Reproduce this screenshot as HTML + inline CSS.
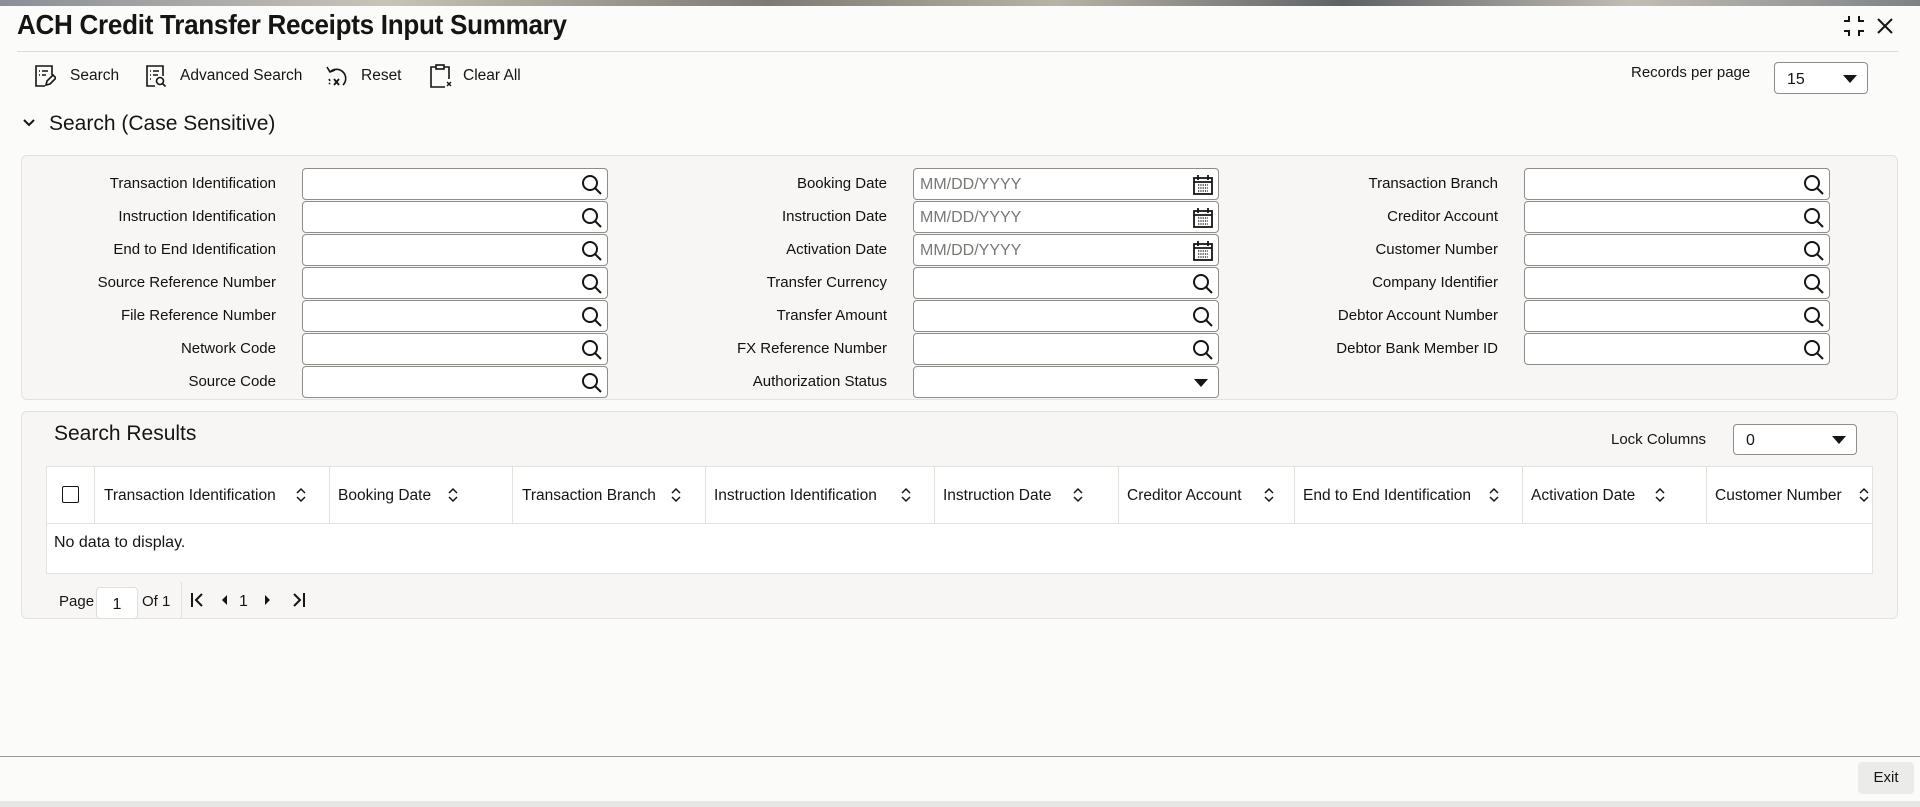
<!DOCTYPE html>
<html><head><meta charset="utf-8"><style>
*{box-sizing:border-box;margin:0;padding:0}
body{width:1920px;height:807px;position:relative;background:#fbfbfa;font-family:"Liberation Sans",sans-serif;color:#161513;overflow:hidden}
.a{position:absolute}
.strip{left:0;top:0;width:1920px;height:6px;background:linear-gradient(90deg,#8a8f96,#c9c3b8 20%,#7d7a72 40%,#b9b3a6 55%,#5e6266 70%,#c2bdb3 85%,#7d8287)}
.title{left:17px;top:9px;font-size:28px;font-weight:bold;transform:scaleX(.93);transform-origin:left;white-space:nowrap;letter-spacing:-.3px}
.hr{height:1px;background:#dcdbd8}
.tb{top:67px;font-size:15.5px;white-space:nowrap}
.panel{background:#f7f6f4;border:1px solid #e4e2de;border-radius:6px}
.lbl{font-size:15px;text-align:right;width:260px;white-space:nowrap;color:#111}
.inp{width:306px;height:32px;background:#fff;border:1px solid #8f8d89;border-radius:4px}
.inp svg{position:absolute;right:4px;top:5px}
.ph{position:absolute;left:6px;top:7px;font-size:16px;color:#7a7874}
.th{font-size:15.5px;top:487px;white-space:nowrap}
.vl{width:1px;background:#e4e2de}
</style></head><body>
<div class="a strip"></div>
<div class="a title">ACH Credit Transfer Receipts Input Summary</div>
<svg class="a" style="left:1843px;top:15px" width="22" height="22" viewBox="0 0 22 22" fill="none" stroke="#161513" stroke-width="2"><path d="M6 1v5H1M16 1v5h5M6 21v-5H1M16 21v-5h5"/></svg>
<svg class="a" style="left:1875px;top:16px" width="20" height="20" viewBox="0 0 20 20" stroke="#161513" stroke-width="2"><path d="M3 3l14 14M17 3L3 17"/></svg>
<div class="a hr" style="left:17px;top:51px;width:1881px"></div>

<svg class="a" style="left:34px;top:64px" width="22" height="24" viewBox="0 0 22 24" fill="none" stroke="#161513" stroke-width="1.6"><path d="M11 22H2V2h16v9"/><path d="M5 7h1M8 7h6M5 11h1M8 11h4"/><path d="M12 21l1-4 6-6 3 3-6 6z"/></svg>
<div class="a tb" style="left:70px">Search</div>
<svg class="a" style="left:145px;top:64px" width="22" height="24" viewBox="0 0 22 24" fill="none" stroke="#161513" stroke-width="1.6"><path d="M10 22H2V2h16v10"/><path d="M5 7h1M8 7h6M5 11h1M8 11h5M5 15h1"/><circle cx="15" cy="17" r="3.5"/><path d="M17.5 19.5l3 3"/></svg>
<div class="a tb" style="left:180px">Advanced Search</div>
<svg class="a" style="left:325px;top:64px" width="26" height="24" viewBox="0 0 26 24" fill="none" stroke="#161513" stroke-width="1.6"><path d="M5 8A9 9 0 1 1 18 21"/><path d="M2 3l3 5 5-2"/><path d="M9 15l5 6M14 15l-5 6" stroke-width="1.8"/><path d="M4 15l1 2M4 20l1-1" /></svg>
<div class="a tb" style="left:361px">Reset</div>
<svg class="a" style="left:429px;top:63px" width="24" height="26" viewBox="0 0 24 26" fill="none" stroke="#161513" stroke-width="1.6"><path d="M7 4H2v20h14"/><path d="M15 4h5v12"/><rect x="7" y="2" width="8" height="4"/><path d="M18 19l4 4M22 19l-4 4" stroke-width="1.4"/></svg>
<div class="a tb" style="left:463px">Clear All</div>

<div class="a" style="left:1631px;top:64px;font-size:15px">Records per page</div>
<div class="a inp" style="left:1774px;top:62px;width:94px;height:32px;border-color:#8f8d89"><span class="ph" style="color:#161513;left:12px;top:8px">15</span><svg class="a" style="right:10px;top:12px" width="14" height="8"><path d="M0 0h14L7 8z" fill="#161513"/></svg></div>

<svg class="a" style="left:22px;top:118px" width="14" height="10" viewBox="0 0 14 10" fill="none" stroke="#161513" stroke-width="2"><path d="M2 2l5 5 5-5"/></svg>
<div class="a" style="left:49px;top:112px;font-size:21px;white-space:nowrap">Search (Case Sensitive)</div>

<div class="a panel" style="left:21px;top:155px;width:1877px;height:245px"></div>
<div id="form"></div>

<div class="a panel" style="left:21px;top:411px;width:1877px;height:208px"></div>
<div class="a" style="left:54px;top:422px;font-size:21px;white-space:nowrap">Search Results</div>
<div class="a" style="left:1611px;top:431px;font-size:15px">Lock Columns</div>
<div class="a inp" style="left:1733px;top:424px;width:124px;height:31px"><span class="ph" style="color:#161513;left:12px;top:7px">0</span><svg class="a" style="right:10px;top:11px" width="14" height="8"><path d="M0 0h14L7 8z" fill="#161513"/></svg></div>

<div class="a" style="left:46px;top:466px;width:1827px;height:108px;background:#fff;border:1px solid #e4e2de"></div>
<div class="a hr" style="left:46px;top:523px;width:1827px;background:#e4e2de"></div>
<div class="a" style="left:62px;top:486px;width:17px;height:17px;border:1.6px solid #161513;border-radius:2px"></div>
<div id="th"></div>
<div class="a" style="left:54px;top:534px;font-size:16px">No data to display.</div>

<div class="a" style="left:59px;top:593px;font-size:15px">Page</div>
<div class="a" style="left:96px;top:587px;width:42px;height:32px;background:#fff;border:1px solid #e0deda;border-radius:4px;font-size:16px;text-align:center;padding-top:8px">1</div>
<div class="a" style="left:142px;top:593px;font-size:15px">Of 1</div>
<div class="a vl" style="left:181px;top:582px;height:37px"></div>
<svg class="a" style="left:190px;top:592px" width="120" height="16" viewBox="0 0 120 16" fill="#161513" stroke="#161513"><path d="M2 1v14" stroke-width="2"/><path d="M12 2L6 8l6 6" fill="none" stroke-width="2"/><path d="M37 3v10l-5-5z" stroke="none"/><text x="49" y="14" font-size="16" stroke="none" font-family="Liberation Sans">1</text><path d="M75 3v10l5-5z" stroke="none"/><path d="M104 2l6 6-6 6" fill="none" stroke-width="2"/><path d="M114 1v14" stroke-width="2"/></svg>

<div class="a hr" style="left:0;top:756px;width:1920px;background:#9a9894"></div>
<div class="a" style="left:1858px;top:762px;width:56px;height:32px;background:#ebebea;border-radius:4px;font-size:15px;text-align:center;padding-top:7px">Exit</div>
<div class="a" style="left:0;top:801px;width:1920px;height:6px;background:#e6e6e5"></div>

<script>
const S='<svg width="22" height="22" viewBox="0 0 22 22" fill="none" stroke="#161513" stroke-width="2"><circle cx="9" cy="9" r="7"/><path d="M14 14l6 6"/></svg>';
const C='<svg width="22" height="22" viewBox="0 0 22 22" fill="none" stroke="#161513" stroke-width="1.8"><rect x="2" y="4" width="18" height="16"/><path d="M6 1v5M16 1v5M2 8h18"/><path d="M6 11h10M6 14h10M6 17h10" stroke-width="1.2" stroke-dasharray="1.3 1"/></svg>';
const D='<svg width="14" height="8" style="top:12px;right:10px"><path d="M0 0h14L7 8z" fill="#161513"/></svg>';
const cols=[
 [16,302,[["Transaction Identification",S],["Instruction Identification",S],["End to End Identification",S],["Source Reference Number",S],["File Reference Number",S],["Network Code",S],["Source Code",S]]],
 [627,913,[["Booking Date",C,1],["Instruction Date",C,1],["Activation Date",C,1],["Transfer Currency",S],["Transfer Amount",S],["FX Reference Number",S],["Authorization Status",D]]],
 [1238,1524,[["Transaction Branch",S],["Creditor Account",S],["Customer Number",S],["Company Identifier",S],["Debtor Account Number",S],["Debtor Bank Member ID",S]]]];
let h='';
cols.forEach(([lx,ix,rows])=>rows.forEach((r,i)=>{const t=168+i*33;
h+=`<div class="a lbl" style="left:${lx}px;top:${t+7}px">${r[0]}</div><div class="a inp" style="left:${ix}px;top:${t}px">${r[2]?'<span class="ph">MM/DD/YYYY</span>':''}${r[1]}</div>`;}));
document.getElementById('form').innerHTML=h;
const hd=[["Transaction Identification",104,301],["Booking Date",338,453],["Transaction Branch",522,676],["Instruction Identification",714,906],["Instruction Date",943,1078],["Creditor Account",1127,1269],["End to End Identification",1303,1494],["Activation Date",1531,1660],["Customer Number",1715,1864]];
const div=[94,329,512,705,934,1118,1294,1522,1706];
let t='';div.forEach(x=>t+=`<div class="a vl" style="left:${x}px;top:467px;height:56px"></div>`);
hd.forEach(([n,x,s])=>{t+=`<div class="a th" style="left:${x}px">${n}</div><svg class="a" style="left:${s-5}px;top:487px" width="10" height="16" viewBox="0 0 10 16" fill="none" stroke="#161513" stroke-width="1.5"><path d="M1 6l4-4 4 4M1 10l4 4 4-4"/></svg>`});
document.getElementById('th').innerHTML=t;
</script>
</body></html>
